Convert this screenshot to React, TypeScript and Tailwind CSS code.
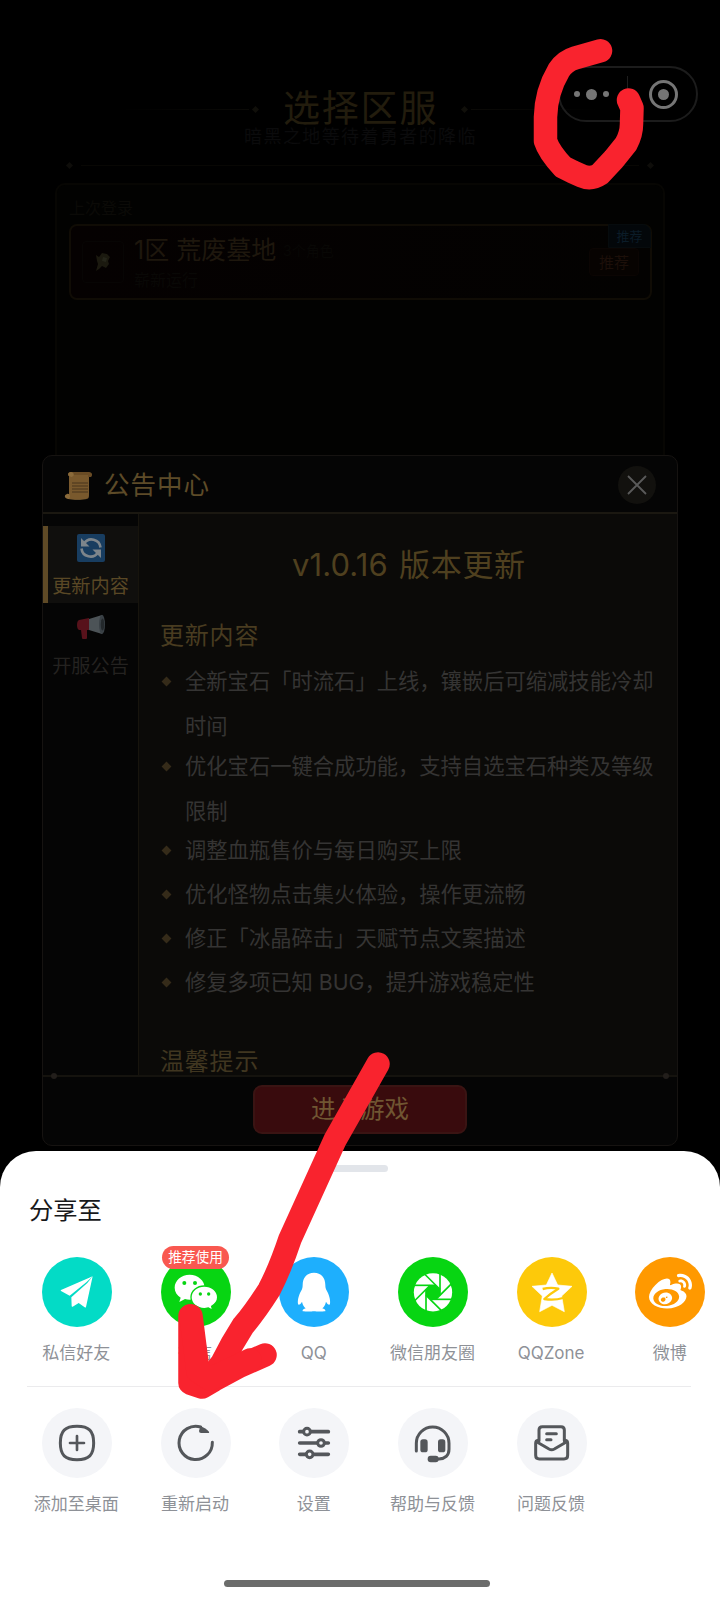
import type { ReactNode } from "react";
import { FaWeibo } from "react-icons/fa";

const updates = [
  { text: "全新宝石「时流石」上线，镶嵌后可缩减技能冷却时间", long: true },
  { text: "优化宝石一键合成功能，支持自选宝石种类及等级限制", long: true },
  { text: "调整血瓶售价与每日购买上限" },
  { text: "优化怪物点击集火体验，操作更流畅" },
  { text: "修正「冰晶碎击」天赋节点文案描述" },
  { text: "修复多项已知 BUG，提升游戏稳定性" },
];

const Glyph = ({ children }: { children: ReactNode }) => (
  <svg viewBox="0 0 210 210" className="h-[70px] w-[70px]">
    {children}
  </svg>
);

const LineGlyph = ({ children }: { children: ReactNode }) => (
  <svg
    viewBox="0 0 210 210"
    className="h-[70px] w-[70px]"
    fill="none"
    stroke="#54575b"
    strokeWidth="9"
    strokeLinecap="round"
    strokeLinejoin="round"
  >
    {children}
  </svg>
);

const Plane = () => (
  <Glyph>
    <path fill="#fff" d="M152 58 57 99q-2 1 0 3l26 14 50-40ZM152 58 132 150q-1 3-4 1l-18-13-18 11q-3 1-3-2l-1-26 48-43Z" />
  </Glyph>
);

const Wechat = () => (
  <Glyph>
    <path fill="#fff" d="M86 53c-25 0-45 17-45 39 0 13 7 23 18 30l-4 13 17-9c4 1 9 2 14 2 25 0 45-15 45-36S111 53 86 53Z" />
    <path
      fill="#fff"
      stroke="#07d512"
      strokeWidth="4"
      d="M130 87c-22 0-40 15-40 34s18 34 40 34c4 0 8-1 12-2l13 7-3-12c10-6 18-16 18-27 0-19-18-34-40-34Z"
    />
    <g fill="#07d512">
      <circle cx="70" cy="78" r="6" />
      <circle cx="102" cy="78" r="6" />
      <circle cx="118" cy="111" r="5" />
      <circle cx="143" cy="111" r="5" />
    </g>
  </Glyph>
);

const Penguin = () => (
  <Glyph>
    <path
      fill="#fff"
      d="M105 47C83 47 71 62 71 84c0 6-1 9-2 13-9 15-14 32-12 44 2 5 8 0 12-7 2 10 6 16 11 20-9 3-10 6-9 9 9 1 26 1 34 0 8 1 25 1 34 0 1-3 0-6-9-9 5-4 9-10 11-20 4 7 10 12 12 7 2-12-3-29-12-44-1-4-2-7-2-13 0-22-12-37-34-37Z"
    />
  </Glyph>
);

const Aperture = () => (
  <Glyph>
    <circle cx="105" cy="106" r="57.5" fill="#fff" />
    <g transform="translate(105 106)" stroke="#07d512" strokeWidth="5" fill="#07d512">
      <path stroke="none" d="M21-8.7 8.7-21h-17.4L-21-8.7V8.7L-8.7 21H8.7L21 8.7Z" />
      {[0, 45, 90, 135, 180, 225, 270, 315].map((a) => (
        <path key={a} d="M21-60V9" transform={`rotate(${a})`} />
      ))}
    </g>
  </Glyph>
);

const Star = () => (
  <Glyph>
    <path
      fill="#fff"
      stroke="#fff"
      strokeWidth="2"
      strokeLinejoin="round"
      d="m105 48 17 36 43 4-31 29 8 47-37-19-37 19 8-47-31-29 43-4Z"
    />
    <path
      fill="none"
      stroke="#fdc90a"
      strokeWidth="7"
      strokeLinejoin="round"
      d="M77 96c16-4 32-4 47-1-15 9-29 19-42 31 19 3 36 3 56-3"
    />
  </Glyph>
);

const Weibo = () => <FaWeibo className="h-[43px] w-[43px] text-white" />;

const AddIcon = () => (
  <LineGlyph>
    <path d="M105 55c36 0 50 14 50 50s-14 50-50 50-50-14-50-50 14-50 50-50Z" />
    <path strokeWidth="8" d="M105 84v42M84 105h42" />
  </LineGlyph>
);

const RestartIcon = () => (
  <LineGlyph>
    <path d="M154 103a50 50 0 1 1-35-46" />
    <path fill="#54575b" stroke="none" d="M118 55c11 3 20 9 26 16 1 2 0 4-2 4h-22q-6 0-6-6Z" />
  </LineGlyph>
);

const SettingsIcon = () => (
  <LineGlyph>
    <path strokeWidth="11" d="M62 71h86M62 105h86M62 139h86" />
    <g fill="#f4f5f8">
      <circle cx="84" cy="71" r="10" />
      <circle cx="126" cy="105" r="10" />
      <circle cx="92" cy="139" r="10" />
    </g>
  </LineGlyph>
);

const HeadsetIcon = () => (
  <LineGlyph>
    <path d="M55 129v-23a49 49 0 0 1 98 0v18c0 18-12 28-30 29h-16" />
    <g fill="#54575b" stroke="none">
      <rect x="67" y="94" width="22" height="39" rx="8" />
      <rect x="120" y="94" width="22" height="39" rx="8" />
      <rect x="89" y="143" width="33" height="20" rx="9" />
    </g>
  </LineGlyph>
);

const FeedbackIcon = () => (
  <LineGlyph>
    <path d="M66 98V66q0-10 10-10h56q10 0 10 10v32" />
    <path d="M64 97q-8 1-8 9v36q0 11 11 11h74q11 0 11-11v-36q0-8-8-9" />
    <path d="m60 102 36 21q8 4 16 0l36-21" />
    <path d="M89 77h29M89 95h13" />
  </LineGlyph>
);

const shareTargets = [
  { label: "私信好友", bg: "bg-[#03dbc6]", icon: <Plane /> },
  { label: "微信", bg: "bg-[#07d512]", icon: <Wechat />, badge: "推荐使用" },
  { label: "QQ", bg: "bg-[#1eaffd]", icon: <Penguin /> },
  { label: "微信朋友圈", bg: "bg-[#07d512]", icon: <Aperture /> },
  { label: "QQZone", bg: "bg-[#fdc90a]", icon: <Star /> },
  { label: "微博", bg: "bg-[#ff9900]", icon: <Weibo /> },
];

const actions = [
  { label: "添加至桌面", icon: <AddIcon /> },
  { label: "重新启动", icon: <RestartIcon /> },
  { label: "设置", icon: <SettingsIcon /> },
  { label: "帮助与反馈", icon: <HeadsetIcon /> },
  { label: "问题反馈", icon: <FeedbackIcon /> },
];

const Diamond = ({ className }: { className: string }) => (
  <span className={`block shrink-0 rotate-45 ${className}`} />
);

const ServerPage = () => (
  <div className="flex h-full flex-col px-[55px] pt-[85px]">
    <div className="flex h-[48px] items-center justify-center text-[#221c0d]">
      <span className="h-px w-[130px] bg-linear-to-r from-transparent to-[#0b0a07]" />
      <Diamond className="ml-1 mr-[25px] h-[5px] w-[5px] bg-[#100f0a]" />
      <h1 className="w-[156px] whitespace-nowrap text-[37px] leading-[50px] tracking-[1.8px]">选择区服</h1>
      <Diamond className="ml-[23px] mr-1 h-[5px] w-[5px] bg-[#100f0a]" />
      <span className="h-px w-[130px] bg-linear-to-l from-transparent to-[#0b0a07]" />
    </div>
    <p className="-mt-[6px] h-5 pl-[1px] text-center text-[18px] leading-5 tracking-[1.4px] text-[#0b0b0c]">
      暗黑之地等待着勇者的降临
    </p>
    <div className="mt-[15px] flex h-[6px] items-center gap-[9px] px-3">
      <Diamond className="h-[5px] w-[5px] bg-[#0e0d0a]" />
      <span className="h-px flex-1 bg-[#080704]" />
      <Diamond className="h-[5px] w-[5px] bg-[#0e0d0a]" />
    </div>
    <section className="mt-[15px] h-[500px] rounded-[10px] border-2 border-[#070603] bg-[#020201] pl-3 pr-[11px] pt-[13px]">
      <p className="text-[16px] leading-[20px] text-[#0b0a07]">上次登录</p>
      <div className="relative mt-[6px] flex h-[76px] items-center rounded-[8px] border-2 border-[#100c05] bg-linear-to-r from-[#050101] to-[#030201] pl-[11px]">
        <div className="flex h-[42px] w-[42px] items-center justify-center rounded border border-[#070504]">
          <svg viewBox="0 0 18 20" className="h-5 w-[18px]">
            <path fill="#1b190f" d="M2 3l3 2 3-4 5 1 3 3-2 4 1 3-3 4-4-2-3 3-3 2 2-7-1-3Z" />
            <path fill="#25251a" d="m9 5 4 1-1 4-4-1Z" />
          </svg>
        </div>
        <div className="ml-[10px] flex h-full flex-col pt-[8px]">
          <div className="flex h-[32px] items-center">
            <span className="w-[149px] whitespace-nowrap text-[25px] leading-8 text-[#1e170d]">1区 荒废墓地</span>
            <span className="text-[14px] text-[#080705]">3个角色</span>
          </div>
          <span className="mt-[2px] text-[16px] leading-6 text-[#090806]">崭新运行</span>
        </div>
        <span className="absolute right-[-1px] top-[-2px] h-[24px] w-[43px] rounded-tr-[8px] border border-[#060b0d] bg-[#03070a] text-center text-[13px] leading-[22px] text-[#0b1c28]">
          推荐
        </span>
        <span className="absolute right-[11px] top-[22px] h-[28px] w-[50px] rounded border border-[#0b0503] bg-[#070301] text-center text-[15px] leading-[27px] text-[#1c0f09]">
          推荐
        </span>
      </div>
    </section>
  </div>
);

const Capsule = () => (
  <div className="absolute left-[558px] top-[66px] flex h-[56px] w-[140px] items-center rounded-full border-2 border-[#1c1c1c]">
    <div className="flex w-[67px] items-center justify-center gap-[6px] pr-1">
      <span className="h-[6px] w-[6px] rounded-full bg-[#757575]" />
      <span className="h-[11px] w-[11px] rounded-full bg-[#757575]" />
      <span className="h-[6px] w-[6px] rounded-full bg-[#757575]" />
    </div>
    <span className="mb-px h-[36px] w-px bg-[#1e1e1e]" />
    <div className="flex flex-1 items-center justify-center pl-[2px]">
      <span className="flex h-[29px] w-[29px] items-center justify-center rounded-full border-[3px] border-[#757575]">
        <span className="h-[11px] w-[11px] rounded-full bg-[#757575]" />
      </span>
    </div>
  </div>
);

const NoticeModal = () => (
  <div className="absolute left-[42px] top-[455px] flex h-[691px] w-[636px] flex-col overflow-hidden rounded-[10px] border border-[#161311] bg-[#050505]">
    <header className="flex h-[58px] shrink-0 items-center border-b-2 border-[#1b1811] pl-[21px] pr-[21px] pt-[2px]">
      <svg viewBox="0 0 28 29" className="h-[29px] w-[28px]">
        <path fill="#79592d" d="M5 4h20v20c0 3-1 4-3 4H5Z" />
        <path fill="#6a4c25" d="M7 1h18c3 0 4 3 2 5h-3V4H9v2H6C3 4 4 1 7 1Z" />
        <path fill="#8a6a3a" d="M7 1c3 0 4 4 1 5C3 6 3 1 7 1ZM3 23c3-1 4 3 2 5h18c-5 1-14 1-19 0-4-1-4-4-1-5Z" />
        <path stroke="#49341c" strokeWidth="1.2" d="M8 12h16M8 15h16M8 18h16M8 21h16" />
      </svg>
      <h2 className="ml-[12px] flex-1 text-[25.5px] leading-9 tracking-[1px] text-[#5d4b28]">公告中心</h2>
      <button className="flex h-[38px] w-[38px] items-center justify-center rounded-full bg-[#12110e]">
        <svg viewBox="0 0 20 20" className="h-5 w-5" stroke="#5a5a5a" strokeWidth="1.8">
          <path d="M1 1l18 18M19 1 1 19" />
        </svg>
      </button>
    </header>
    <div className="flex min-h-0 flex-1">
      <nav className="w-[96px] shrink-0 border-r border-[#17140d] pt-[12px]">
        <div className="flex h-[77px] flex-col items-center border-l-[5px] border-[#5f4a26] bg-[#100f0d] pr-[5px] pt-[8px]">
          <svg viewBox="0 0 28 28" className="h-7 w-7">
            <rect width="28" height="28" rx="2" fill="#183d60" />
            <g fill="none" stroke="#7d858b" strokeWidth="2.6">
              <path d="M7 9.500A9 9 0 0 1 23.500 13.500" />
              <path d="M21 18.500A9 9 0 0 1 4.500 14.500" />
            </g>
            <path fill="#7d858b" d="M4 4v8.500h8.500ZM24 24v-8.500h-8.500Z" />
          </svg>
          <span className="mt-[10px] whitespace-nowrap text-[19.2px] leading-7 text-[#5a4825]">更新内容</span>
        </div>
        <div className="flex h-[77px] flex-col items-center pt-[11px]">
          <svg viewBox="0 0 28 26" className="h-[26px] w-[28px]">
            <path fill="#57121b" d="M2 6 12 4v12H10v8q0 1-1 1H6q-1 0-1-1l-1-8H2Q0 15 0 11t2-5Z" />
            <path fill="#4c5357" d="m12 5 13-4v19l-13-4Z" />
            <ellipse cx="25" cy="10.5" rx="3" ry="9.7" fill="#3a4146" />
            <ellipse cx="25.5" cy="10.5" rx="1.7" ry="6" fill="#23282b" />
          </svg>
          <span className="mt-[12px] whitespace-nowrap text-[19.2px] leading-7 text-[#242220]">开服公告</span>
        </div>
      </nav>
      <article className="flex-1 bg-[#0b0a08] pl-[21px]">
        <h1 className="mt-[31px] flex h-[40px] items-center gap-[11px] pl-[132px] text-[31px] leading-10 text-[#4f401f]">
          <span className="w-[96px] whitespace-nowrap tracking-[0.1px]">v1.0.16</span>
          <span className="tracking-[0.7px]">版本更新</span>
        </h1>
        <h3 className="mt-[33px] text-[24px] leading-9 tracking-[0.8px] text-[#493c20]">更新内容</h3>
        <ul className="mt-[5px] text-[21.3px] leading-[45px] text-[#353433]">
          {updates.map((u) => (
            <li key={u.text} className={u.long ? "flex h-[84.6px]" : "flex h-[43.8px]"}>
              <Diamond className="ml-[3px] mr-[15px] mt-[19px] h-[7px] w-[7px] bg-[#352b19]" />
              <span className="w-[474px]">{u.text}</span>
            </li>
          ))}
        </ul>
        <h3 className="mt-[41px] text-[24px] leading-9 tracking-[0.8px] text-[#403620]">温馨提示</h3>
      </article>
    </div>
    <footer className="relative flex h-[70px] shrink-0 items-start justify-center border-t-2 border-[#15130e] pt-[8px]">
      <span className="absolute left-[8px] top-[-4px] h-[6px] w-[6px] rounded-full bg-[#221e1b]" />
      <span className="absolute right-[8px] top-[-4px] h-[6px] w-[6px] rounded-full bg-[#221e1b]" />
      <button className="h-[49px] w-[214px] rounded-[9px] border-2 border-[#3a1413] bg-[#390b0d] text-[24.5px] leading-[43px] text-[#705632]">
        进入游戏
      </button>
    </footer>
  </div>
);

const ShareSheet = () => (
  <div className="absolute bottom-0 left-0 flex h-[449px] w-full flex-col overflow-hidden rounded-t-[36px] bg-white">
    <div className="ml-[330px] mt-[14px] h-[7px] w-[58px] shrink-0 rounded-full bg-[#e2e5ea]" />
    <h2 className="ml-[29px] mt-[20px] text-[24.3px] leading-9 text-[#17181a]">分享至</h2>
    <div className="mt-[29px] flex pl-[17.5px]">
      {shareTargets.map((t) => (
        <div key={t.label} className="relative flex w-[118.7px] shrink-0 flex-col items-center">
          <div className={`flex h-[70px] w-[70px] items-center justify-center rounded-full ${t.bg}`}>{t.icon}</div>
          {t.badge && (
            <span className="absolute top-[-11px] h-[23px] w-[67px] rounded-full bg-[#f95850] text-center text-[13.7px] leading-[22px] text-white">
              {t.badge}
            </span>
          )}
          <span className="mr-[1px] mt-[14px] whitespace-nowrap text-[17px] leading-6 text-[#8e9197]">{t.label}</span>
        </div>
      ))}
    </div>
    <div className="ml-[27px] mr-[29px] mt-[21px] h-px shrink-0 bg-[#ebebed]" />
    <div className="mt-[21px] flex pl-[17.5px]">
      {actions.map((a) => (
        <div key={a.label} className="flex w-[118.7px] shrink-0 flex-col items-center">
          <div className="h-[70px] w-[70px] rounded-full bg-[#f4f5f8]">{a.icon}</div>
          <span className="mr-[1px] mt-[14px] whitespace-nowrap text-[17px] leading-6 text-[#8e9197]">{a.label}</span>
        </div>
      ))}
    </div>
    <div className="mb-[13px] ml-[224px] mt-auto h-[7px] w-[266px] shrink-0 rounded-full bg-[#6b6c6b]" />
  </div>
);

// hand-drawn red circle and arrow
const Marks = () => (
  <svg
    viewBox="0 0 720 1600"
    className="pointer-events-none absolute left-0 top-0 h-[1600px] w-[720px]"
    fill="none"
    stroke="#f9232e"
    strokeWidth="23.5"
    strokeLinecap="round"
    strokeLinejoin="round"
  >
    <path d="M600.500 50.700 575 58Q565 61 559 70 546 92 545.500 117V141Q549 152 563 167L573 172 582 176Q591 180 600 174L614 159 626 144Q631.500 134 631.500 124L632 108 628.500 100" />
    <path d="M378 1064 335 1140 290 1239Q280 1269 269 1290 255 1312 243 1326 232 1343 222 1363L207 1382" />
    <path d="M190 1316V1383L202 1387 214 1380 240 1366 265 1355" />
    <path d="m191 1316 7 55 12 8 40-19" />
  </svg>
);

const App = () => {
  return (
    <main className="relative h-[1600px] w-[720px] overflow-hidden bg-black font-[Inter,'Noto_Sans_CJK_SC',sans-serif]">
      <ServerPage />
      <Capsule />
      <NoticeModal />
      <ShareSheet />
      <Marks />
    </main>
  );
};

export default App;
